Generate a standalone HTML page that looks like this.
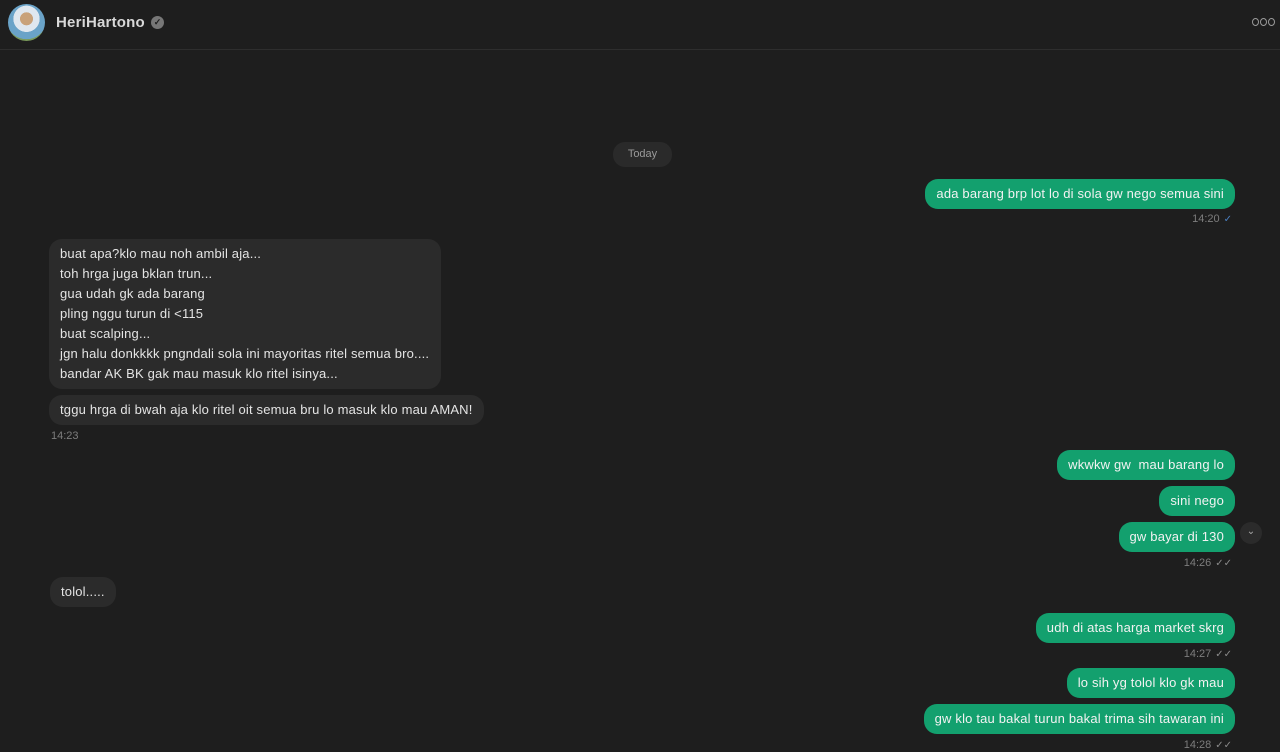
<!DOCTYPE html>
<html><head><meta charset="utf-8"><style>
body{margin:0;width:1280px;height:752px;background:#1e1e1e;font-family:"Liberation Sans",sans-serif;overflow:hidden;position:relative;color:#e6e6e6}
.hdr{position:absolute;left:0;top:0;width:1280px;height:49px;border-bottom:1px solid #2e2e2e;background:#1e1e1e}
.av{position:absolute;left:8px;top:4px;width:37px;height:37px;border-radius:50%;background:radial-gradient(circle at 50% 40%,#c9a27a 0 22%,#dfe7ef 23% 45%,#6aa3c8 46% 70%,#7a9a5a 71%)}
.name{position:absolute;left:56px;top:14px;font-weight:bold;font-size:15px;color:#d8d8d8;letter-spacing:0.2px}
.ver{position:absolute;left:151px;top:16px;width:13px;height:13px;border-radius:50%;background:#777;color:#1e1e1e;font-size:9px;text-align:center;line-height:13px;font-weight:bold}
.dots{position:absolute;left:1252px;top:18px;line-height:0}
.dots span{display:inline-block;width:5px;height:6px;border:1.3px solid #9a9a9a;border-radius:50%;margin-right:1px}
.b{position:absolute;height:30px;line-height:30px;padding:0 11px;border-radius:13px;font-size:13px;white-space:nowrap;box-sizing:border-box;letter-spacing:0.18px}
.r{right:45px;background:#13a06e;color:#f2f2f2}
.l{left:49px;background:#2b2b2b;color:#e4e4e4}
.t{position:absolute;font-size:11px;color:#7d7d7d}
.tr{right:48px}
.ck{color:#8a8a8a;font-size:10px;margin-left:4px}
</style></head><body>
<div class="hdr"><div class="av"></div><div class="name">HeriHartono</div><div class="ver">✓</div><div class="dots"><span></span><span></span><span></span></div></div>

<div style="position:absolute;left:613px;top:142px;width:59px;height:25px;border-radius:12px;background:#2a2a2a;color:#9a9a9a;font-size:11px;line-height:25px;text-align:center">Today</div>

<div class="b r" style="top:179px">ada barang brp lot lo di sola gw nego semua sini</div>
<div class="t tr" style="top:213px">14:20<span class="ck" style="color:#4a7fc0">✓</span></div>

<div class="b l" style="top:239px;height:150px;width:392px;line-height:20px;padding-top:5px">buat apa?klo mau noh ambil aja...<br>toh hrga juga bklan trun...<br>gua udah gk ada barang<br>pling nggu turun di &lt;115<br>buat scalping...<br>jgn halu donkkkk pngndali sola ini mayoritas ritel semua bro....<br>bandar AK BK gak mau masuk klo ritel isinya...</div>
<div class="b l" style="top:395px">tggu hrga di bwah aja klo ritel oit semua bru lo masuk klo mau AMAN!</div>
<div class="t" style="left:51px;top:430px">14:23</div>

<div class="b r" style="top:450px">wkwkw gw&nbsp; mau barang lo</div>
<div class="b r" style="top:486px">sini nego</div>
<div class="b r" style="top:522px">gw bayar di 130</div>
<div style="position:absolute;left:1240px;top:522px;width:22px;height:22px;border-radius:50%;background:#2b2b2b;color:#aaa;font-size:10px;text-align:center;line-height:20px">⌄</div>
<div class="t tr" style="top:557px">14:26<span class="ck">✓✓</span></div>

<div class="b l" style="top:577px;left:50px">tolol.....</div>

<div class="b r" style="top:613px">udh di atas harga market skrg</div>
<div class="t tr" style="top:648px">14:27<span class="ck">✓✓</span></div>
<div class="b r" style="top:668px">lo sih yg tolol klo gk mau</div>
<div class="b r" style="top:704px">gw klo tau bakal turun bakal trima sih tawaran ini</div>
<div class="t tr" style="top:739px">14:28<span class="ck">✓✓</span></div>
</body></html>
